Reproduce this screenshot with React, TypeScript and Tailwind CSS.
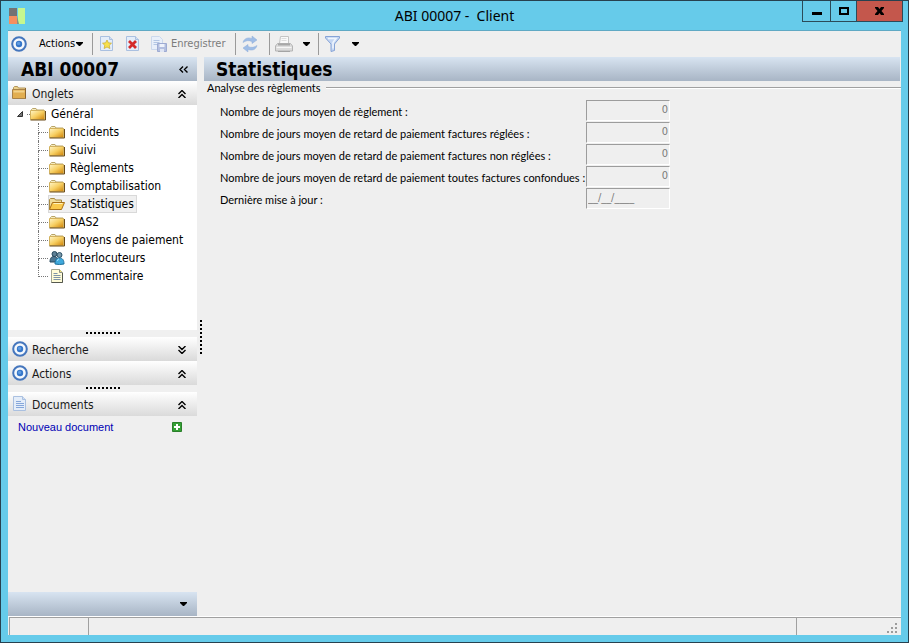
import React, { useState } from "react";

const tahoma = "font-['DejaVu_Sans_Condensed','DejaVu_Sans',sans-serif]";

function Target() {
  return (
    <svg width="16" height="16" viewBox="0 0 16 16" className="shrink-0">
      <circle cx="8" cy="8" r="6.8" fill="#f4f8fd" stroke="#4576bd" strokeWidth="2" />
      <circle cx="8" cy="8" r="3.2" fill="#3576c9" />
      <circle cx="7.6" cy="7.4" r="1.7" fill="#5f9be0" />
    </svg>
  );
}

function Folder() {
  return (
    <svg width="16" height="14" viewBox="0 0 16 14" className="shrink-0">
      <defs>
        <linearGradient id="folder" x1="0" y1="0" x2="1" y2="1">
          <stop offset="0" stopColor="#fff6c8" />
          <stop offset="0.5" stopColor="#f7cf62" />
          <stop offset="1" stopColor="#cf8208" />
        </linearGradient>
      </defs>
      <path d="M1.5 4V2.500l1-1h3.500l1 1.500h7v1" fill="#f6ecc0" stroke="#b9a468" />
      <path d="M0.500 3.500h14v9H0.500z" fill="url(#folder)" stroke="#d3b25e" />
      <path d="M0.500 13h15V4" fill="none" stroke="#6b4b18" />
    </svg>
  );
}

function FolderOpen() {
  return (
    <svg width="16" height="14" viewBox="0 0 16 14" className="shrink-0">
      <path d="M0.500 12.500V2.500l1-1h4l1 1.500h6v3" fill="#f0dc9a" stroke="#a88a42" />
      <path d="M3.500 5.500h12l-3 7H0.500z" fill="#fac94c" stroke="#a8701a" />
      <path d="M4.500 6.500h9" stroke="#fff3bd" />
    </svg>
  );
}

function FolderTab() {
  return (
    <svg width="16" height="14" viewBox="0 0 16 14" className="shrink-0">
      <path d="M1.500 3.500V1.500l1-1h3l1 1.500h7v2" fill="#ecd28c" stroke="#b3945a" />
      <path d="M0.500 3.500h13v9H0.500z" fill="#e2ae50" stroke="#a88248" />
      <path d="M1.500 4.500h11v2h-11z" fill="#f2d28a" />
      <path d="M13.500 2v10.500" stroke="#8a6430" />
    </svg>
  );
}

function People() {
  return (
    <svg width="16" height="14" viewBox="0 0 16 14" className="shrink-0">
      <circle cx="5.500" cy="3" r="2.500" fill="#5d7f95" stroke="#27485c" />
      <path d="M1 11c0-4 1.500-5.500 4-5.500S9 7 9 11z" fill="#4d7691" stroke="#27485c" />
      <circle cx="10.500" cy="4" r="2.500" fill="#7a97a8" stroke="#2c5268" />
      <path d="M6 13c0-4 1.500-6 4.500-6s4.500 2 4.500 6q-4.500 1-9 0z" fill="#3fa9dc" stroke="#1d6f9c" />
      <path d="M8.500 10q0-2 1.500-2" fill="none" stroke="#a4def8" />
    </svg>
  );
}

function Note() {
  return (
    <svg width="16" height="16" viewBox="0 0 16 16" className="shrink-0">
      <path d="M2.500 1.500h8l3 3v10h-11z" fill="#fffcd8" stroke="#a3a792" />
      <path d="M10.500 1.500v3h3" fill="#f1e27c" stroke="#8b8f86" />
      <path d="M4.500 5.500h4M4.500 7.500h7M4.500 9.500h7M4.500 11.500h7" stroke="#7c93a8" />
      <path d="M13.500 5v9.500h-11" fill="none" stroke="#55584e" />
    </svg>
  );
}

function Page({ children }: { children?: React.ReactNode }) {
  return (
    <svg width="16" height="16" viewBox="0 0 16 16" className="shrink-0">
      <path d="M1.500 0.500h9l3 3v11h-12z" fill="#e4edf9" stroke="#aac0e0" />
      <path d="M10.500 0.500v3h3" fill="#cfdef3" stroke="#aac0e0" />
      {children}
    </svg>
  );
}

function Refresh() {
  return (
    <svg width="18" height="18" viewBox="0 0 18 18" fill="#9fbde6" stroke="#8fadd8" strokeWidth="0.500">
      <path d="M2 7.500C3 3.500 6.500 2 11 3.500V1l5 4-5 3.500V6.500C7.500 5 5 5.500 2 7.500z" />
      <path d="M16 10.500c-1 4-4.500 5.500-9 4V17l-5-4 5-3.500v2c3.500 1.500 6 1 9-1z" />
    </svg>
  );
}

function Printer() {
  return (
    <svg width="18" height="18" viewBox="0 0 18 18">
      <path d="M4.500 8.500l1-7h8v7z" fill="#fafafa" stroke="#c4c4c4" />
      <path d="M6.500 3.500h5M6.500 5.500h5" stroke="#dddddd" />
      <path d="M2.500 8.500h13l2 2.500v5H0.500v-5z" fill="#dcdcdc" stroke="#b4b4b4" />
      <path d="M3 9.500h12" stroke="#a8a8a8" strokeWidth="2" />
      <path d="M1.500 12.500h15" stroke="#f6f6f6" />
      <path d="M3 16.500h12" stroke="#a4a4a4" />
    </svg>
  );
}

function Funnel() {
  return (
    <svg width="16" height="18" viewBox="0 0 16 18">
      <path d="M0.500 1.500h14v1.500l-5 6v6.500l-3.500 1V9l-5.500-6z" fill="#c4d6f2" stroke="#86a3d6" />
      <path d="M3 3.500h8L8 7.500v6" fill="none" stroke="#eff5fd" strokeWidth="1.500" />
    </svg>
  );
}

function Caret() {
  return (
    <svg width="7" height="4" viewBox="0 0 7 4" className="shrink-0">
      <path d="M0 0h7v1L4 4H3L0 1z" />
    </svg>
  );
}

function Chevrons({ dir }: { dir: "up" | "down" }) {
  return (
    <svg width="8" height="8" viewBox="0 0 8 8" fill="none" stroke="#000" strokeWidth="1.400">
      {dir === "up" ? (
        <path d="M0.500 4l3.500-3.500L7.500 4M0.500 8L4 4.500 7.500 8" />
      ) : (
        <path d="M0.500 0L4 3.500 7.500 0M0.500 4L4 7.500 7.500 4" />
      )}
    </svg>
  );
}

function Separator() {
  return <div className="h-[22px] w-px bg-[#9a9a9a]" />;
}

function Grip() {
  return (
    <div className="flex h-[7px] justify-center bg-[#f0f0f0] pt-0.5">
      <svg width="36" height="2" viewBox="0 0 36 2">
        <path d="M1 1h35" stroke="#000" strokeWidth="2" strokeDasharray="2 2" />
      </svg>
    </div>
  );
}

function PanelHeader(props: {
  title: string;
  icon: React.ReactNode;
  open: boolean;
  onToggle: () => void;
}) {
  return (
    <div className="flex h-6 items-center bg-linear-to-b from-white to-[#dadada] pr-[11px] pl-1">
      {props.icon}
      <h2 className={`ml-1 flex-1 pt-px text-[12px] text-[#1a1a1a] ${tahoma}`}>{props.title}</h2>
      <button
        aria-label={props.title}
        aria-expanded={props.open}
        onClick={props.onToggle}
        className="flex pt-px"
      >
        <Chevrons dir={props.open ? "up" : "down"} />
      </button>
    </div>
  );
}

const tabs = [
  { name: "Incidents" },
  { name: "Suivi" },
  { name: "Règlements" },
  { name: "Comptabilisation" },
  { name: "Statistiques" },
  { name: "DAS2" },
  { name: "Moyens de paiement" },
  { name: "Interlocuteurs", icon: <People /> },
  { name: "Commentaire", icon: <Note /> },
];

const fields = [
  { id: "reglement", label: "Nombre de jours moyen de règlement :", value: "0" },
  { id: "reglees", label: "Nombre de jours moyen de retard de paiement factures réglées :", value: "0" },
  { id: "nonreglees", label: "Nombre de jours moyen de retard de paiement factures non réglées :", value: "0" },
  { id: "toutes", label: "Nombre de jours moyen de retard de paiement toutes factures confondues :", value: "0" },
  { id: "maj", label: "Dernière mise à jour :", value: "__/__/____" },
];

function Tree() {
  const [selected, setSelected] = useState("Statistiques");
  return (
    <div className={`flex-1 bg-white text-[12px] text-black ${tahoma}`}>
      <div className="flex h-[18px] items-center pl-2">
        <svg width="8" height="8" viewBox="0 0 8 8">
          <path d="M6.500 1.500v5H1.500z" fill="#777" stroke="#333" />
        </svg>
        <span className="ml-[3px] w-[3px] border-t border-dotted border-[#777]" />
        <Folder />
        <span className="ml-[5px]">Général</span>
      </div>
      <ul className="pl-[30px]">
        {tabs.map((tab, i) => (
          <li key={tab.name} className="flex h-[18px] items-center">
            <span className="h-[18px] w-[10px]">
              <span className="block h-[10px] border-b border-l border-dotted border-[#777]" />
              {i < tabs.length - 1 && (
                <span className="block h-2 border-l border-dotted border-[#777]" />
              )}
            </span>
            <button
              onClick={() => setSelected(tab.name)}
              className={`flex h-[18px] items-center gap-[5px] border pr-[2px] ${
                selected === tab.name
                  ? "border-[#d9d9d9] bg-[#f0f0f0]"
                  : "border-transparent"
              }`}
            >
              {tab.icon || (selected === tab.name ? <FolderOpen /> : <Folder />)}
              {tab.name}
            </button>
          </li>
        ))}
      </ul>
    </div>
  );
}

function App() {
  const [search, setSearch] = useState(false);
  const [actions, setActions] = useState(true);
  const [docs, setDocs] = useState(true);
  const [tree, setTree] = useState(true);

  return (
    <div className="flex min-h-screen flex-col border border-[#27414f] bg-[#66cbea] px-[7px] pb-[7px] font-['Lato',sans-serif] text-[11px] text-black">
      <header className="grid h-[30px] grid-cols-[1fr_auto_1fr] items-center border-b border-[#5fa9c4]">
        <svg width="16" height="16" viewBox="0 0 16 16" className="ml-px">
          <path d="M0 0h8v8H0z" fill="#737373" />
          <path d="M0 8h8v8H0z" fill="#f58f5f" />
          <path d="M9 0h7v16H9z" fill="#c6f78f" />
          <path d="M8 8l2 8H8z" fill="#8a8f80" />
        </svg>
        <h1 className="font-['Noto_Sans',sans-serif] text-[14px] whitespace-pre">
          ABI 00007 -  Client
        </h1>
        <div className="-mr-0.5 flex h-[21px] self-start justify-self-end border-x border-b border-[#2b4b59]">
          <button aria-label="Réduire" className="flex w-7 items-center justify-center border-r border-[#2b4b59]">
            <span className="mt-1 h-[3px] w-[10px] bg-black" />
          </button>
          <button aria-label="Agrandir" className="flex w-[26px] items-center justify-center border-r border-[#2b4b59]">
            <span className="h-2 w-[10px] border-2 border-black" />
          </button>
          <button aria-label="Fermer" className="flex w-[45px] items-center justify-center bg-[#c4574c]">
            <svg width="9" height="8" viewBox="0 0 9 8">
              <path d="M0 0h3l1.500 2L6 0h3v1L6.500 4 9 7v1H6L4.500 6 3 8H0V7l2.500-3L0 1z" />
            </svg>
          </button>
        </div>
      </header>

      <div className="flex flex-1 flex-col bg-[#efefef]">
        <div className={`flex h-[26px] items-center pl-[3px] ${tahoma}`}>
          <button className="flex items-center" aria-label="Cible">
            <Target />
          </button>
          <button className="ml-3 flex w-[53px] items-center gap-px">
            Actions <Caret />
          </button>
          <Separator />
          <button aria-label="Nouveau" className="ml-1.5">
            <Page>
              <path d="M8 4l1.400 2.800 3.100.4-2.300 2.100.7 3.200L8 11l-2.900 1.500.7-3.200-2.300-2.100 3.100-.4z" fill="#f7e04b" stroke="#c9a92c" strokeWidth="0.700" />
            </Page>
          </button>
          <button aria-label="Supprimer" className="ml-[10px]">
            <Page>
              <path d="M4 5l7 7M11 5l-7 7" stroke="#d42a2a" strokeWidth="2.800" />
            </Page>
          </button>
          <button className="ml-[10px] flex w-[84px] items-center gap-1 text-[#7b7b7b]">
            <svg width="16" height="16" viewBox="0 0 16 16" className="shrink-0">
              <path d="M0.500 0.500h8l3 3v10h-11z" fill="#e8effa" stroke="#cbd8ec" />
              <path d="M2.500 4.500h6M2.500 6.500h6M2.500 8.500h4" stroke="#b3c6e4" />
              <path d="M6.500 7.500h9v8h-9z" fill="#b3bfe0" stroke="#9eabd2" />
              <path d="M8.500 8h5v3h-5z" fill="#eef2fb" />
              <path d="M9 13h4v3H9z" fill="#dfe5f4" />
            </svg>
            Enregistrer
          </button>
          <Separator />
          <button aria-label="Actualiser" className="flex w-[33px] pl-[5px]">
            <Refresh />
          </button>
          <Separator />
          <button aria-label="Imprimer" className="flex w-12 items-center gap-[10px] pl-[5px]">
            <Printer />
            <Caret />
          </button>
          <Separator />
          <button aria-label="Filtrer" className="flex items-center gap-[11px] pl-1.5">
            <Funnel />
            <Caret />
          </button>
        </div>

        <div className="flex flex-1">
          <aside className="flex w-[189px] flex-col">
            <div className="flex h-6 items-center justify-between bg-linear-to-b from-[#d8e4f1] to-[#a8b5c5] pr-[9px] pl-[13px]">
              <h2 className={`text-[19px] font-bold ${tahoma}`}>ABI 00007</h2>
              <button aria-label="Replier">
                <svg width="9" height="7" viewBox="0 0 9 7" fill="none" stroke="#000" strokeWidth="1.400">
                  <path d="M4 0.500l-3 3 3 3M8.500 0.500l-3 3 3 3" />
                </svg>
              </button>
            </div>
            <PanelHeader title="Onglets" icon={<FolderTab />} open={tree} onToggle={() => setTree(!tree)} />
            <div className="flex h-[225px] flex-col">{tree && <Tree />}</div>
            <Grip />
            <PanelHeader title="Recherche" icon={<Target />} open={search} onToggle={() => setSearch(!search)} />
            <PanelHeader title="Actions" icon={<Target />} open={actions} onToggle={() => setActions(!actions)} />
            <Grip />
            <PanelHeader
              title="Documents"
              icon={
                <Page>
                  <path d="M4 5.500h5M4 7.500h8M4 9.500h8M4 11.500h8" stroke="#86a7da" />
                </Page>
              }
              open={docs}
              onToggle={() => setDocs(!docs)}
            />
            {docs && (
              <div className="flex h-[22px] items-center justify-between pr-[15px] pl-[10px]">
                <a href="#nouveau" className="font-['Liberation_Sans',sans-serif] text-[#0000b4]">
                  Nouveau document
                </a>
                <button aria-label="Ajouter">
                  <svg width="10" height="10" viewBox="0 0 10 10">
                    <path d="M0.500 0.500h9v9h-9z" fill="#35a035" stroke="#2a7f2a" />
                    <path d="M5 2v6M2 5h6" stroke="#fff" strokeWidth="2" />
                  </svg>
                </button>
              </div>
            )}
            <div className="mt-auto flex h-6 items-center justify-end bg-linear-to-b from-[#d8e4f1] to-[#a8b5c5] pr-[10px]">
              <button aria-label="Options">
                <Caret />
              </button>
            </div>
          </aside>

          <div className="flex w-[7px] items-center justify-center">
            <svg width="2" height="34" viewBox="0 0 2 34">
              <path d="M1 0v34" stroke="#000" strokeWidth="2" strokeDasharray="2 2" />
            </svg>
          </div>

          <main className="flex-1">
            <div className="mr-px h-6 bg-linear-to-b from-[#d8e4f1] to-[#a8b5c5] pl-3">
              <h2 className={`text-[19px] leading-6 font-bold ${tahoma}`}>Statistiques</h2>
            </div>
            <div className="flex h-[14px] items-center gap-1.5 pl-[3px]">
              <h3>Analyse des règlements</h3>
              <div className="h-[2px] flex-1 border-t border-[#a0a0a0] bg-white" />
            </div>
            <div className="mt-[5px] pl-4">
              {fields.map((f) => (
                <div key={f.id} className="flex h-[22px]">
                  <label htmlFor={f.id} className="w-[366px] pt-0.5 leading-5 whitespace-nowrap">
                    {f.label}
                  </label>
                  <input
                    id={f.id}
                    defaultValue={f.value}
                    disabled
                    className={`h-[21px] w-[84px] border border-t-[#9c9c9c] border-r-white border-b-white border-l-[#9c9c9c] bg-[#efefef] px-px pb-0.5 text-[#7b7b7b] ${tahoma} ${
                      f.id === "maj" ? "text-left" : "text-right"
                    }`}
                  />
                </div>
              ))}
            </div>
          </main>
        </div>

        <footer className="flex h-[19px] border-t border-white pl-px">
          <div className="w-[79px] border-t border-l border-[#a0a0a0]" />
          <div className="flex-1 border-t border-l border-[#a0a0a0]" />
          <div className="flex w-[105px] items-end justify-end border-t border-l border-[#a0a0a0] pr-1 pb-0.5">
            <svg width="10" height="10" viewBox="0 0 10 10" fill="#9c9c9c">
              <path d="M8 0h2v2H8zM4 4h2v2H4zM8 4h2v2H8zM0 8h2v2H0zM4 8h2v2H4zM8 8h2v2H8z" />
            </svg>
          </div>
        </footer>
      </div>
    </div>
  );
}

export default App;
